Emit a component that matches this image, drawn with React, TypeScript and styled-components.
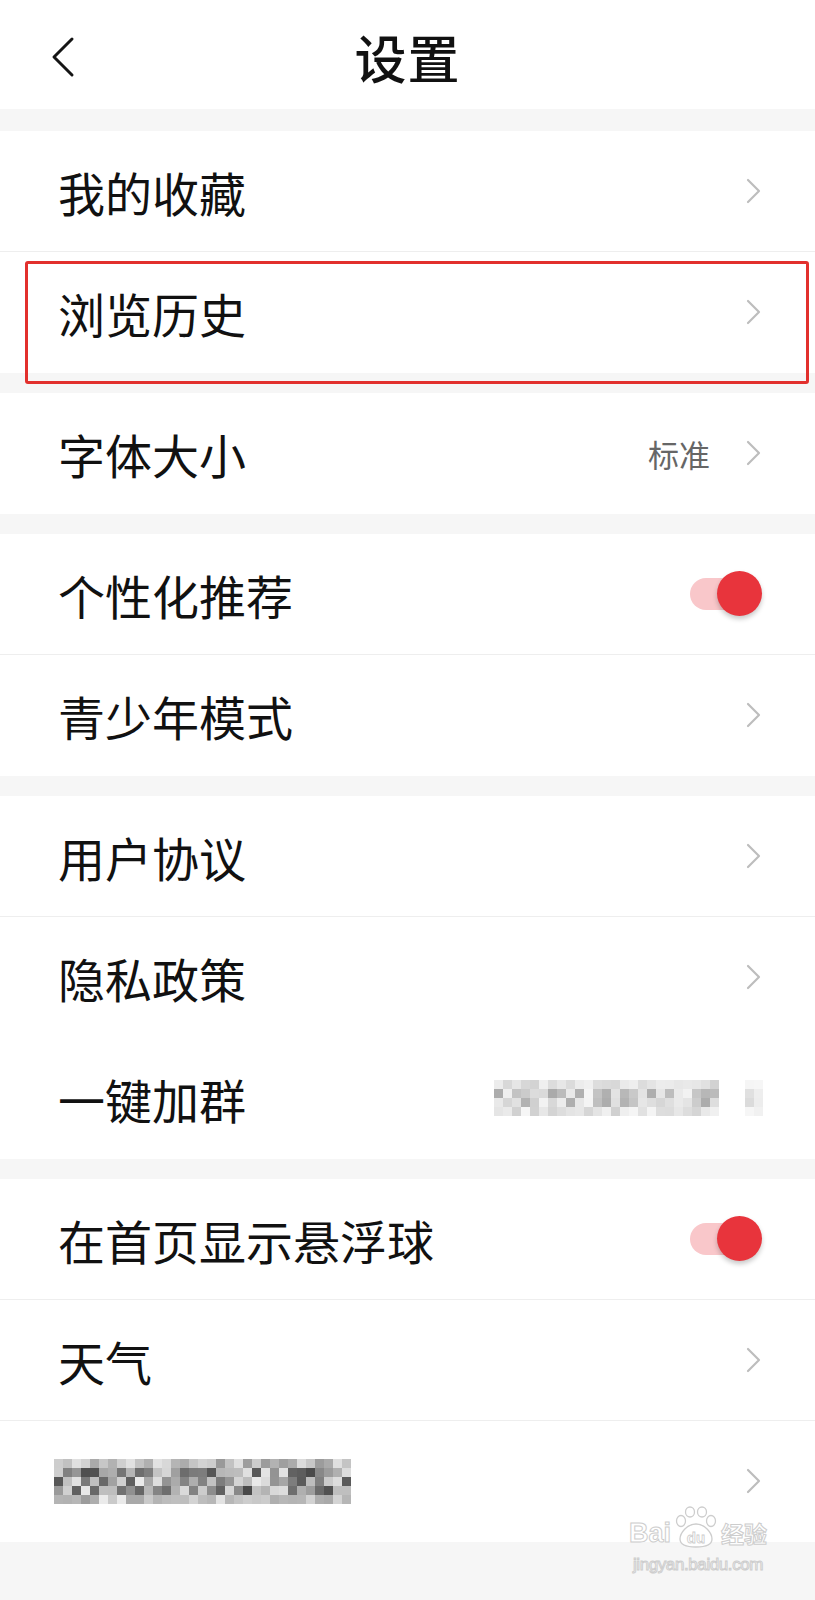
import React, { FunctionComponent } from 'react'
import styled, { createGlobalStyle } from 'styled-components'

const GlobalStyle = createGlobalStyle`
  html, body {
    margin: 0;
    padding: 0;
    background: #f6f6f6;
  }
  body {
    font-family: "Noto Sans CJK SC", "Noto Sans", sans-serif;
    color: #111;
  }
`

const Page = styled.div`
  position: relative;
  width: 815px;
  min-height: 1600px;
  background: #f6f6f6;
  overflow: hidden;
`

const Header = styled.header`
  position: relative;
  height: 109px;
  background: #fff;
  display: flex;
  align-items: center;
  justify-content: center;
  padding-top: 4px;
  box-sizing: border-box;
`

const BackButton = styled.button`
  position: absolute;
  left: 44px;
  top: 30px;
  width: 40px;
  height: 54px;
  padding: 0;
  border: 0;
  background: none;
  display: flex;
  align-items: center;
  justify-content: center;
`

const Title = styled.h1`
  margin: 0;
  font-size: 52px;
  font-weight: 500;
  line-height: 1;
  letter-spacing: 1px;
  color: #111;
`

const Section = styled.section<{ $first?: boolean }>`
  margin-top: ${(p) => (p.$first ? 22 : 20)}px;
  background: #fff;
  display: flex;
  flex-direction: column;
`

const Row = styled.div<{ $divider?: boolean }>`
  height: 121px;
  box-sizing: border-box;
  display: flex;
  align-items: center;
  padding: 0 53px 0 58px;
  border-bottom: 1px solid ${(p) => (p.$divider ? '#eeeeee' : 'transparent')};
`

const Label = styled.span`
  flex: 1;
  font-size: 47px;
  font-weight: 400;
  line-height: 1;
  color: #111;
`

const Value = styled.span`
  font-size: 31px;
  color: #666;
  margin-right: 36px;
  line-height: 1;
`

const ToggleWrap = styled.div`
  position: relative;
  width: 72px;
  height: 46px;
  display: flex;
  align-items: center;
`

const ToggleTrack = styled.div`
  width: 60px;
  height: 32px;
  border-radius: 16px;
  background: #f9c7ca;
`

const ToggleKnob = styled.div`
  position: absolute;
  right: 0;
  top: 0;
  width: 45px;
  height: 45px;
  border-radius: 50%;
  background: #e8343c;
  box-shadow: 0 3px 5px rgba(0, 0, 0, 0.22);
`

const Highlight = styled.div`
  position: absolute;
  left: 25px;
  top: 261px;
  width: 784px;
  height: 123px;
  box-sizing: border-box;
  border: 3px solid #e2302d;
  border-radius: 3px;
  pointer-events: none;
`

const Watermark = styled.div`
  position: absolute;
  left: 620px;
  top: 1506px;
  width: 156px;
  display: flex;
  flex-direction: column;
  align-items: center;
  pointer-events: none;
  color: rgba(255, 255, 255, 0.85);
  -webkit-text-stroke: 1px #cdcdcd;
`

const MarkTop = styled.div`
  display: flex;
  align-items: flex-end;
  gap: 2px;
`

const MarkWord = styled.span<{ $cjk?: boolean }>`
  font-family: ${(p) => (p.$cjk ? '"Noto Sans CJK SC", sans-serif' : '"Liberation Sans", sans-serif')};
  font-size: ${(p) => (p.$cjk ? 23 : 27)}px;
  font-weight: 700;
  line-height: 1;
  margin-bottom: ${(p) => (p.$cjk ? 3 : 1)}px;
`

const MarkUrl = styled.span`
  margin-top: 8px;
  font-family: "Liberation Sans", sans-serif;
  font-size: 17px;
  letter-spacing: -0.4px;
  line-height: 1;
`

const Chevron: FunctionComponent = () => (
  <svg width="16" height="26" viewBox="0 0 16 26">
    <polyline points="2,2 13,13 2,24" fill="none" stroke="#bdbdbd" strokeWidth="2.2" strokeLinecap="round" strokeLinejoin="round" />
  </svg>
)

const Toggle: FunctionComponent = () => (
  <ToggleWrap>
    <ToggleTrack />
    <ToggleKnob />
  </ToggleWrap>
)

// pixelated blur, seeded so every render is the same
const seeded = (seed: number) => () => {
  seed |= 0
  seed = (seed + 0x6d2b79f5) | 0
  let t = Math.imul(seed ^ (seed >>> 15), 1 | seed)
  t = (t + Math.imul(t ^ (t >>> 7), 61 | t)) ^ t
  return ((t ^ (t >>> 14)) >>> 0) / 4294967296
}

type MosaicProps = { cols: number; rows: number; cell: number; seed: number; min: number; max: number }

const Mosaic: FunctionComponent<MosaicProps> = ({ cols, rows, cell, seed, min, max }) => {
  const rand = seeded(seed)
  const cells = []
  for (let r = 0; r < rows; r++) {
    // outer rows of a blurred word are paler
    const edge = r === 0 || r === rows - 1 ? 0.5 : 0
    for (let c = 0; c < cols; c++) {
      let v = min + (max - min) * Math.pow(rand(), 0.9)
      v = Math.round(v + (max - v) * edge)
      cells.push(<rect key={`${r}-${c}`} x={c * cell} y={r * cell} width={cell} height={cell} fill={`rgb(${v},${v},${v})`} />)
    }
  }
  return (
    <svg width={cols * cell} height={rows * cell} viewBox={`0 0 ${cols * cell} ${rows * cell}`}>
      {cells}
    </svg>
  )
}

const Paw: FunctionComponent = () => (
  <svg width="46" height="42" viewBox="0 0 46 42">
    <g fill="rgba(255,255,255,0.85)" stroke="#cdcdcd" strokeWidth="1.3">
      <ellipse cx="8" cy="15" rx="4.5" ry="5.5" />
      <ellipse cx="17" cy="6" rx="4.5" ry="5" />
      <ellipse cx="29" cy="6" rx="4.5" ry="5" />
      <ellipse cx="38" cy="15" rx="4.5" ry="5.5" />
      <path d="M23 18 C14 18 7 27 7 33 C7 39 13 41 23 41 C33 41 39 39 39 33 C39 27 32 18 23 18 Z" />
    </g>
    <text x="23" y="37" textAnchor="middle" fontFamily="Liberation Sans, sans-serif" fontSize="15" fontWeight="700" fill="#fff" stroke="#cdcdcd" strokeWidth="0.8">
      du
    </text>
  </svg>
)

const BlurLabel = styled.div`
  flex: 1;
  display: flex;
  align-items: center;
  margin-left: -4px;
`

const BlurValue = styled.div`
  display: flex;
  align-items: center;
  gap: 26px;
  margin-right: -1px;
`

const App: FunctionComponent = () => {
  return (
    <Page>
      <GlobalStyle />
      <Header>
        <BackButton aria-label="返回">
          <svg width="26" height="42" viewBox="0 0 26 42">
            <polyline points="21,3 3,21 21,39" fill="none" stroke="#151515" strokeWidth="3" strokeLinecap="round" strokeLinejoin="round" />
          </svg>
        </BackButton>
        <Title>设置</Title>
      </Header>

      <Section $first>
        <Row $divider>
          <Label>我的收藏</Label>
          <Chevron />
        </Row>
        <Row>
          <Label>浏览历史</Label>
          <Chevron />
        </Row>
      </Section>

      <Section>
        <Row>
          <Label>字体大小</Label>
          <Value>标准</Value>
          <Chevron />
        </Row>
      </Section>

      <Section>
        <Row $divider>
          <Label>个性化推荐</Label>
          <Toggle />
        </Row>
        <Row>
          <Label>青少年模式</Label>
          <Chevron />
        </Row>
      </Section>

      <Section>
        <Row $divider>
          <Label>用户协议</Label>
          <Chevron />
        </Row>
        <Row>
          <Label>隐私政策</Label>
          <Chevron />
        </Row>
        <Row>
          <Label>一键加群</Label>
          <BlurValue>
            <Mosaic cols={25} rows={4} cell={9} seed={17} min={165} max={248} />
            <Mosaic cols={2} rows={4} cell={9} seed={5} min={215} max={250} />
          </BlurValue>
        </Row>
      </Section>

      <Section>
        <Row $divider>
          <Label>在首页显示悬浮球</Label>
          <Toggle />
        </Row>
        <Row $divider>
          <Label>天气</Label>
          <Chevron />
        </Row>
        <Row>
          <BlurLabel>
            <Mosaic cols={33} rows={5} cell={9} seed={42} min={70} max={235} />
          </BlurLabel>
          <Chevron />
        </Row>
      </Section>

      <Highlight />

      <Watermark>
        <MarkTop>
          <MarkWord>Bai</MarkWord>
          <Paw />
          <MarkWord $cjk>经验</MarkWord>
        </MarkTop>
        <MarkUrl>jingyan.baidu.com</MarkUrl>
      </Watermark>
    </Page>
  )
}

export default App
